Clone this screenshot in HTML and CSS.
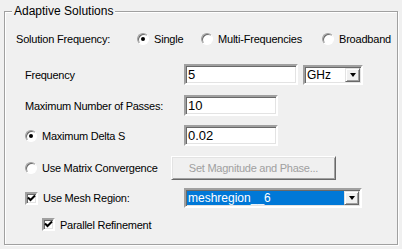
FILE: index.html
```html
<!DOCTYPE html>
<html lang="en">

<head>
    <meta charset="UTF-8">
    <meta name="viewport" content="width=device-width, initial-scale=1.0">
    <title>Adaptive Solutions</title>
    <link rel="stylesheet" href="styles.css">
</head>

<body>
    <div class="dialog">
        <fieldset class="group">
            <legend>Adaptive Solutions</legend>

            <div class="row row-type">
                <span class="label label-type">Solution Frequency:</span>
                <span class="option opt-single"><span class="radio checked"></span>Single</span>
                <span class="option opt-multi"><span class="radio"></span>Multi-Frequencies</span>
                <span class="option"><span class="radio"></span>Broadband</span>
            </div>

            <div class="row row-freq">
                <span class="label">Frequency</span>
                <span class="textbox tb-freq">5</span>
                <span class="combo combo-unit">
                    <span class="combo-value">GHz</span>
                    <span class="drop"><span class="arrow"></span></span>
                </span>
            </div>

            <div class="row row-passes">
                <span class="label">Maximum Number of Passes:</span>
                <span class="textbox tb-short">10</span>
            </div>

            <div class="row row-delta">
                <span class="label"><span class="radio checked"></span>Maximum Delta S</span>
                <span class="textbox tb-short">0.02</span>
            </div>

            <div class="row row-matrix">
                <span class="label label-matrix"><span class="radio"></span>Use Matrix Convergence</span>
                <span class="button disabled">Set Magnitude and Phase...</span>
            </div>

            <div class="row row-mesh">
                <span class="label"><span class="check checked"><svg width="9" height="9" viewBox="0 0 9 9"><path d="M1 3.5 L3.5 6 L8 1.5" fill="none" stroke="#000" stroke-width="2"/></svg></span>Use Mesh Region:</span>
                <span class="combo combo-mesh">
                    <span class="combo-value selected">meshregion__6</span>
                    <span class="drop"><span class="arrow"></span></span>
                </span>
            </div>

            <div class="row row-parallel">
                <span class="check checked"><svg width="9" height="9" viewBox="0 0 9 9"><path d="M1 3.5 L3.5 6 L8 1.5" fill="none" stroke="#000" stroke-width="2"/></svg></span>Parallel Refinement
            </div>
        </fieldset>
    </div>
</body>

</html>
```

FILE: styles.css
```css
body {
    margin: 0;
    background-color: #f0f0f0;
    font-family: "Liberation Sans", Arial, sans-serif;
    font-size: 11px;
    color: #000;
}

.dialog {
    width: 402px;
    height: 249px;
    padding: 5px 4px 4px 4px;
    box-sizing: border-box;
}

.group {
    margin: 0;
    padding: 0;
    height: 100%;
    box-sizing: border-box;
    border: 1px solid #a0a0a0;
    box-shadow: inset 1px 1px #fff, 1px 1px #fff;
}

.group legend {
    margin-left: 7px;
    padding: 0 2px;
    line-height: 13px;
    font-size: 12px;
    background-color: #f0f0f0;
}

.row {
    display: flex;
    align-items: center;
    padding-left: 20px;
    white-space: nowrap;
    letter-spacing: -0.25px;
}

.label {
    display: flex;
    align-items: center;
    width: 159px;
    flex-shrink: 0;
}

.row-type {
    padding-left: 11px;
    height: 16px;
    margin-top: 13px;
    letter-spacing: -0.2px;
}

.label-type {
    width: 121px;
}

.option {
    display: flex;
    align-items: center;
}

.opt-single {
    width: 64px;
}

.opt-multi {
    width: 121px;
}

.row-freq {
    height: 21px;
    margin-top: 17px;
}

.row-passes {
    height: 21px;
    margin-top: 10px;
}

.row-delta {
    height: 21px;
    margin-top: 9px;
}

.row-matrix {
    height: 24px;
    margin-top: 10px;
}

.label-matrix {
    width: 146px;
}

.row-mesh {
    height: 20px;
    margin-top: 8px;
}

.row-parallel {
    height: 13px;
    margin-top: 10px;
    padding-left: 37px;
}

/* classic controls */
.radio {
    width: 10px;
    height: 10px;
    border-radius: 50%;
    border: 1px solid;
    border-color: #a0a0a0 #fff #fff #a0a0a0;
    box-shadow: inset 1px 1px #696969;
    background-color: #fff;
    margin-right: 5px;
    display: flex;
    align-items: center;
    justify-content: center;
    flex-shrink: 0;
}

.radio.checked::after {
    content: "";
    width: 4px;
    height: 4px;
    border-radius: 50%;
    background-color: #000;
}

.check {
    width: 9px;
    height: 9px;
    border: 2px solid;
    border-color: #a0a0a0 #fff #fff #a0a0a0;
    box-shadow: inset 1px 1px #696969, inset -1px -1px #e3e3e3;
    background-color: #fff;
    margin-right: 5px;
    display: flex;
    align-items: center;
    justify-content: center;
    flex-shrink: 0;
}

.textbox {
    box-sizing: border-box;
    height: 21px;
    border: 2px solid;
    border-color: #a0a0a0 #fff #fff #a0a0a0;
    box-shadow: inset 1px 1px #696969, inset -1px -1px #e3e3e3;
    background-color: #fff;
    padding: 0 2px;
    line-height: 17px;
    font-size: 13px;
    letter-spacing: 0;
}

.tb-freq {
    width: 114px;
}

.tb-short {
    width: 94px;
}

.combo {
    box-sizing: border-box;
    height: 20px;
    display: flex;
    border: 2px solid;
    border-color: #a0a0a0 #fff #fff #a0a0a0;
    box-shadow: inset 1px 1px #696969, inset -1px -1px #e3e3e3;
    background-color: #fff;
    padding: 1px;
    letter-spacing: 0;
}

.combo-unit {
    width: 60px;
    margin-left: 5px;
}

.combo-mesh {
    width: 178px;
}

.combo-value {
    flex: 1;
    padding-left: 1px;
    line-height: 14px;
    font-size: 12px;
}

.combo-value.selected {
    background-color: #0078d7;
    color: #fff;
}

.drop {
    width: 15px;
    box-sizing: border-box;
    border: 1px solid;
    border-color: #e3e3e3 #696969 #696969 #e3e3e3;
    box-shadow: inset 1px 1px #fff, inset -1px -1px #a0a0a0;
    background-color: #f0f0f0;
    display: flex;
    align-items: center;
    justify-content: center;
}

.arrow {
    width: 0;
    height: 0;
    border-left: 3.5px solid transparent;
    border-right: 3.5px solid transparent;
    border-top: 4px solid #000;
}

.button {
    box-sizing: border-box;
    width: 165px;
    height: 24px;
    border: 1px solid;
    border-color: #fff #696969 #696969 #fff;
    box-shadow: inset 1px 1px #e3e3e3, inset -1px -1px #a0a0a0;
    background-color: #f0f0f0;
    display: flex;
    align-items: center;
    justify-content: center;
}

.button.disabled {
    color: #a0a0a0;
}
```
